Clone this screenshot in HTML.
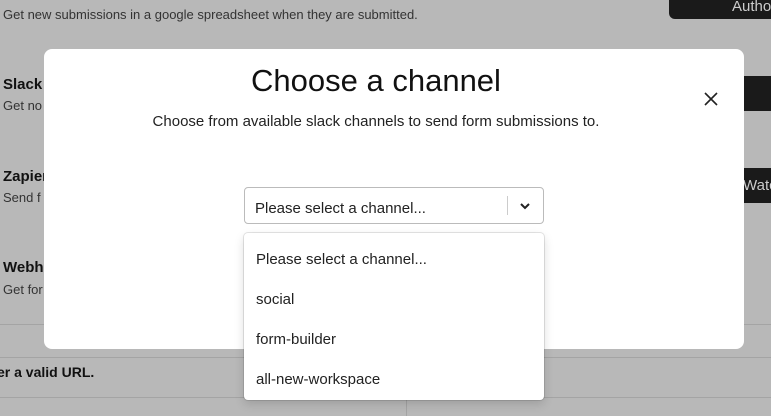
<!DOCTYPE html>
<html><head><style>
body{margin:0;width:771px;height:416px;background:#b8b8b8;font-family:"Liberation Sans",sans-serif;position:relative;overflow:hidden;color:#111}
.a{position:absolute;white-space:nowrap}
.t{font-size:15px;font-weight:bold;color:#111}
.s{font-size:13px;color:#333}
.btn{position:absolute;background:#1a1a1a;border-radius:6px;color:#ccc;font-size:15px}
.line{position:absolute;background:#a4a4a4}
.modal{position:absolute;left:44px;top:49px;width:700px;height:300px;background:#fff;border-radius:8px}
.sel{position:absolute;left:244px;top:187px;width:298px;height:35px;border:1px solid #bbb;border-radius:4px;background:#fff}
.dd{position:absolute;left:244px;top:233px;width:300px;height:167px;background:#fff;border-radius:4px;box-shadow:0 0 0 1px rgba(0,0,0,.1),0 4px 10px rgba(0,0,0,.15)}
.o{position:absolute;left:12px;font-size:15px;color:#222}
</style></head><body>
<div class="a s" style="left:3px;top:7px">Get new submissions in a google spreadsheet when they are submitted.</div>
<div class="btn" style="left:669px;top:-6px;width:110px;height:25px"><span class="a" style="left:63px;top:4px">Autho</span></div>
<div class="a t" style="left:3px;top:76px">Slack</div>
<div class="a s" style="left:3px;top:98px">Get no</div>
<div class="btn" style="left:735px;top:76px;width:50px;height:35px"></div>
<div class="a t" style="left:3px;top:168px">Zapier</div>
<div class="a s" style="left:3px;top:190px">Send f</div>
<div class="btn" style="left:735px;top:168px;width:50px;height:35px"><span class="a" style="left:8px;top:9px">Watch</span></div>
<div class="a t" style="left:3px;top:259px">Webhook</div>
<div class="a s" style="left:3px;top:282px">Get for</div>
<div class="line" style="left:0;top:324px;width:771px;height:1px"></div>
<div class="line" style="left:0;top:357px;width:771px;height:1px"></div>
<div class="a" style="left:-3px;top:364px;font-size:14px;font-weight:bold">er a valid URL.</div>
<div class="line" style="left:0;top:397px;width:771px;height:1px"></div>
<div class="line" style="left:406px;top:397px;width:1px;height:19px"></div>
<div class="modal">
<div class="a" style="left:0;width:664px;text-align:center;top:14px;font-size:31px;color:#111">Choose a channel</div>
<svg class="a" style="left:659px;top:42px" width="16" height="16" viewBox="0 0 16 16"><path d="M2 2L14 14M14 2L2 14" stroke="#222" stroke-width="1.6" fill="none"/></svg>
<div class="a" style="left:0;width:664px;text-align:center;top:64px;font-size:15px;color:#222">Choose from available slack channels to send form submissions to.</div>
</div>
<div class="sel">
<div class="a" style="left:10px;top:12px;font-size:15px;color:#222">Please select a channel...</div>
<div class="a" style="left:262px;top:8px;width:1px;height:19px;background:#ccc"></div>
<svg class="a" style="left:274px;top:13px" width="12" height="10" viewBox="0 0 12 10"><path d="M2 3L6 7L10 3" stroke="#222" stroke-width="2" fill="none"/></svg>
</div>
<div class="dd">
<div class="o" style="top:18px">Please select a channel...</div>
<div class="o" style="top:58px">social</div>
<div class="o" style="top:98px">form-builder</div>
<div class="o" style="top:138px">all-new-workspace</div>
</div>
</body></html>
